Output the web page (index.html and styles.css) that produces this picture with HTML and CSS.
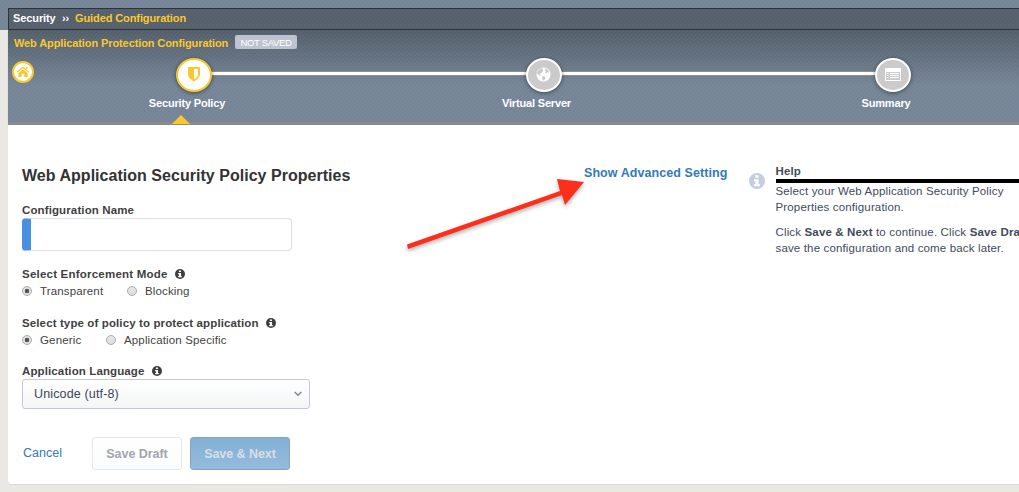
FILE: index.html
```html
<!DOCTYPE html>
<html lang="en">
<head>
<meta charset="utf-8">
<title>Guided Configuration</title>
<link rel="stylesheet" href="styles.css">
</head>
<body>
<svg class="symbols" aria-hidden="true">
  <symbol id="info" viewBox="0 0 16 16">
    <circle cx="8" cy="8" r="8" fill="currentColor"/>
    <path d="M6.3 2.3h3.2v2.5H6.3zM5 6.2h4.600v5h1.300v2H5v-2h1.400v-3H5z" fill="#fff"/>
  </symbol>
</svg>
<div class="page">
  <nav class="breadcrumb"><span class="crumb-root">Security</span><span class="crumb-sep">››</span><span class="crumb-current">Guided Configuration</span></nav>
  <header class="wizard">
    <div class="wizard-title"><span class="wizard-name">Web Application Protection Configuration</span><span class="badge">NOT SAVED</span></div>
    <div class="wizard-nav">
      <a class="home"><svg width="14" height="12" viewBox="0 0 14 12"><path d="M7 .5 13.500 6l-.7.8L7 2.200 1.200 6.800.5 6zM10 1h1.500v2.500L10 2.300zM7 3.200l4.600 3.700V11H8.300V7.800H5.700V11H2.400V6.900z" fill="#fbc82c"/></svg></a>
      <div class="steps">
        <div class="rail"></div>
        <div class="step step-active">
          <span class="node"><svg width="12" height="15" viewBox="0 0 12 15"><path fill-rule="evenodd" d="M1 0h10q1 0 1 1v6.500Q12 11 6 14.500 0 11 0 7.500V1q0-1 1-1zM6 2v10.300Q10 10 10 7.500V2z" fill="#fbc82c"/></svg></span>
          <span class="step-label">Security Policy</span>
        </div>
        <div class="step">
          <span class="node"><svg width="15" height="15" viewBox="0 0 15 15"><circle cx="7.500" cy="7.500" r="7" fill="#fff"/><path d="M5 1.200 7 1.800 6.500 3 7.500 3.800 6 5 5 6.500 3.800 6.500 4.200 8 5.500 8.500 4.500 9 2.500 7.500 1 6.500Q1.500 3 5 1.200zM9.500 1.500l2.500 1.700 1.300 2.300-1.800-.5-1 1.200-1.500-.7L10 4.200 8.800 3zM6.500 9l2.500.8.5 1.400-1.700 2.300-1-.2-.7-2.300z" fill="#c9c9c9"/></svg></span>
          <span class="step-label">Virtual Server</span>
        </div>
        <div class="step">
          <span class="node"><svg width="16" height="13" viewBox="0 0 16 13"><path fill-rule="evenodd" d="M1 0h14q1 0 1 1v11q0 1-1 1H1q-1 0-1-1V1q0-1 1-1zM1 4v8h14V4z" fill="#fff"/><path d="M2 5.500h1.500M5 5.500h9M2 7.500h1.500M5 7.500h9M2 9.500h1.500M5 9.500h9" stroke="#fff"/></svg></span>
          <span class="step-label">Summary</span>
        </div>
      </div>
    </div>
  </header>
  <main class="panel">
    <form class="form">
      <div class="heading"><h1>Web Application Security Policy Properties</h1><a class="advanced">Show Advanced Setting</a></div>
      <label class="label name-label">Configuration Name</label>
      <div class="name-input"></div>
      <div class="label mode-label"><span>Select Enforcement Mode</span><svg class="hint"><use href="#info"/></svg></div>
      <div class="options"><i class="radio checked"></i><span class="opt-a">Transparent</span><i class="radio"></i><span>Blocking</span></div>
      <div class="label type-label"><span>Select type of policy to protect application</span><svg class="hint"><use href="#info"/></svg></div>
      <div class="options"><i class="radio checked"></i><span class="opt-c">Generic</span><i class="radio"></i><span>Application Specific</span></div>
      <div class="label lang-label"><span>Application Language</span><svg class="hint"><use href="#info"/></svg></div>
      <div class="select"><span>Unicode (utf-8)</span><svg width="8" height="6" viewBox="0 0 8 6"><path d="M.7 1 4 4.300 7.300 1" fill="none" stroke="#858990" stroke-width="1.500"/></svg></div>
      <div class="actions"><a class="cancel">Cancel</a><span class="btn draft">Save Draft</span><span class="btn next">Save &amp; Next</span></div>
    </form>
    <aside class="help">
      <svg class="help-icon"><use href="#info"/></svg>
      <div class="help-body">
        <h2>Help</h2>
        <p>Select your Web Application Security Policy<br>Properties configuration.</p>
        <p>Click <b>Save &amp; Next</b> to continue. Click <b>Save Draft</b> to<br>save the configuration and come back later.</p>
      </div>
    </aside>
  </main>
</div>
<svg class="arrow" width="190" height="85" viewBox="0 0 190 85"><path d="M7 68.500 160 15 157 3 184 6 165 29 162 19 8 73z" fill="#fc2f1b"/></svg>
</body>
</html>
```
FILE: styles.css
```css
* { box-sizing: border-box; }
body {
  margin: 0;
  height: 492px;
  overflow: hidden;
  background:
    repeating-linear-gradient(135deg, #ffffff0a 0 1px, #0000 1px 2.828px) 0 0 / 100% 30px no-repeat,
    linear-gradient(#748496 30px, #e9e8e3 30px);
  font: 11.5px/16px "Liberation Sans", Arial, sans-serif;
  letter-spacing: .15px;
  color: #3f3f3f;
}
.symbols { display: none; }
.page { padding: 8px 0 0 8px; }
.breadcrumb {
  display: flex;
  height: 22px;
  padding: 0 4px;
  border: 1px solid #2e3339;
  border-right: 0;
  background: repeating-linear-gradient(135deg, #ffffff08 0 1px, #0000 1px 2.828px), #545f6b;
  color: #fff;
  font-size: 11px;
  letter-spacing: -.1px;
  font-weight: bold;
  line-height: 18px;
  white-space: nowrap;
}
.crumb-root { width: 49px; }
.crumb-sep { width: 13px; }
.crumb-current { color: #fbc82c; }
.wizard {
  height: 95px;
  padding-top: 5px;
  background: repeating-linear-gradient(135deg, #ffffff0a 0 1px, #0000 1px 2.828px), linear-gradient(#525d69, #748496 55px);
  border-bottom: 3px solid #8b8b8b;
  box-shadow: 0 1px 1px #ccc;
  font-size: 11px;
  letter-spacing: -.1px;
}
.wizard-title { display: flex; height: 16px; padding-left: 6px; }
.wizard-name { width: 221px; color: #fbc82c; font-weight: bold; line-height: 17px; white-space: nowrap; }
.badge {
  width: 62px;
  height: 14px;
  border-radius: 2px;
  background: #bdc3d0;
  color: #fff;
  font-size: 9.500px;
  letter-spacing: -.35px;
  line-height: 15px;
  text-align: center;
}
.wizard-nav { display: flex; padding-left: 4px; }
.home {
  display: flex;
  align-items: center;
  justify-content: center;
  width: 22px;
  height: 22px;
  margin-top: 10px;
  border: 2px solid #fbc82c;
  border-radius: 50%;
  background: #fff;
}
.steps {
  position: relative;
  display: grid;
  grid-template-columns: 349.500px 349.500px 120px;
  margin: 7px 0 0 93px;
}
.rail { position: absolute; top: 13.500px; left: 70px; width: 700px; height: 3px; background: #fff; box-shadow: 0 0 0 1px #8e8d8a; }
.step { position: relative; display: flex; flex-direction: column; align-items: center; width: 120px; height: 66px; }
.node {
  display: flex;
  align-items: center;
  justify-content: center;
  width: 36px;
  height: 34px;
  margin-left: 14px;
  padding-bottom: 2px;
  border: 2px solid #fff;
  border-radius: 50%;
  background: #cbcbcb;
  box-shadow: 0 1px 4px #0007;
}
.step-active .node { border-color: #fbc82c; background: #fff; }
.step-label { margin-top: 3px; color: #fff; font-weight: bold; letter-spacing: -.17px; white-space: nowrap; }
.step-active::after {
  content: "";
  position: absolute;
  left: 45px;
  bottom: 0;
  border: solid transparent;
  border-width: 0 9px 9px;
  border-bottom-color: #fbc82c;
}
.panel {
  display: flex;
  height: 360px;
  background: #fff;
  border-bottom: 1px solid #d9d9d6;
  border-bottom-left-radius: 4px;
}
.form { flex: none; width: 741px; padding: 39px 0 0 14px; }
.heading { display: flex; height: 38px; letter-spacing: .03px; white-space: nowrap; }
h1 { width: 562px; margin: 0; font-size: 16px; line-height: 24px; color: #333; }
.advanced { color: #337ab7; font-size: 12.500px; font-weight: bold; letter-spacing: .07px; line-height: 18px; }
.label { display: flex; align-items: center; height: 16px; font-weight: bold; letter-spacing: .12px; white-space: nowrap; }
.hint { width: 10px; height: 10px; margin-left: 7px; }
.name-input {
  width: 270px;
  height: 33px;
  border: 1px solid #dbdee8;
  border-left: 9px solid #4a90e2;
  border-radius: 4px;
}
.mode-label { margin-top: 15px; letter-spacing: .22px; }
.options { display: flex; height: 18px; padding-top: 1px; white-space: nowrap; }
.radio {
  width: 10px;
  height: 10px;
  margin: 3px 8px 0 0;
  border: 1px solid #aaa;
  border-radius: 50%;
  background: linear-gradient(#e8e8e8, #ddd);
}
.checked { background: radial-gradient(circle, #555 2px, #e3e3e3 2.600px); }
.opt-a { width: 87px; }
.opt-c { width: 66px; }
.type-label { margin-top: 15px; }
.lang-label { margin-top: 14px; }
.select {
  display: flex;
  align-items: center;
  justify-content: space-between;
  width: 288px;
  height: 30px;
  padding: 0 7px 0 11px;
  border: 1px solid #c7c8d5;
  border-radius: 3px;
  background: linear-gradient(#fff, #f4f5f7);
  color: #3d4558;
  font-size: 12.500px;
}
.actions { display: flex; margin-top: 28px; font-size: 12.500px; letter-spacing: 0; line-height: 32px; }
.cancel { width: 70px; padding-left: 1px; color: #337ab7; }
.btn { height: 33px; border: 1px solid #e5e7ee; border-radius: 3px; font-weight: bold; letter-spacing: -.05px; text-align: center; white-space: nowrap; }
.draft { width: 90px; background: linear-gradient(#fff, #fafbfc); color: #a2a5ae; }
.next { width: 100px; margin-left: 8px; background: linear-gradient(#83b0d6, #94bbdc); border-color: #8aa3bc; color: #d8dfe5; }
.help { display: flex; width: 270px; padding-top: 39px; color: #434a5c; white-space: nowrap; overflow: hidden; }
.help-icon { flex: none; width: 16px; height: 16px; margin-top: 9px; color: #c4cede; }
.help-body { flex: none; width: 252px; margin-left: 10.500px; }
h2 { margin: 0; height: 19px; border-bottom: 4px solid #000; font-size: 11.500px; line-height: 14px; }
.help p { margin: 0 0 9px; }
.arrow { position: absolute; left: 400px; top: 176px; filter: drop-shadow(0 2px 2px #0005); }
```
